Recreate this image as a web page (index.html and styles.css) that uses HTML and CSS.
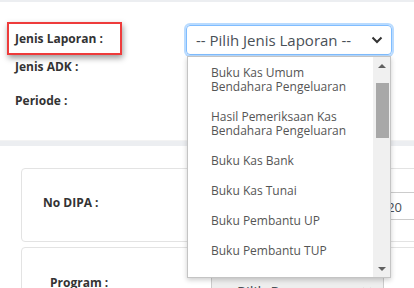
FILE: index.html
```html
<!DOCTYPE html>
<html lang="id">
<head>
  <meta charset="UTF-8">
  <title>Laporan Bendahara</title>
  <link rel="stylesheet" href="styles.css">
</head>
<body>
  <div class="topbar"></div>

  <div class="panel filter">
    <div class="row">
      <div class="label-box"><label>Jenis Laporan :</label></div>
      <div class="select focused">
        <span>-- Pilih Jenis Laporan --</span>
        <svg class="chevron" width="12" height="8" viewBox="0 0 12 8"><path d="M1.5 1.5 L6 6 L10.5 1.5" fill="none" stroke="#333" stroke-width="2"/></svg>
      </div>
    </div>
    <div class="row row-adk"><label>Jenis ADK :</label></div>
    <div class="row row-periode"><label>Periode :</label></div>

    <div class="dropdown">
      <ul class="options">
        <li>Buku Kas Umum<br>Bendahara Pengeluaran</li>
        <li>Hasil Pemeriksaan Kas<br>Bendahara Pengeluaran</li>
        <li>Buku Kas Bank</li>
        <li>Buku Kas Tunai</li>
        <li>Buku Pembantu UP</li>
        <li>Buku Pembantu TUP</li>
      </ul>
      <div class="scrollbar">
        <div class="arrow up"></div>
        <div class="thumb"></div>
        <div class="arrow down"></div>
      </div>
    </div>
  </div>

  <div class="divider"></div>

  <div class="panel content">
    <div class="card card-dipa">
      <label>No DIPA :</label>
      <div class="input">2020</div>
    </div>
    <div class="card card-program">
      <label>Program :</label>
      <div class="select disabled">
        <span>Pilih Program</span>
        <svg class="chevron" width="12" height="8" viewBox="0 0 12 8"><path d="M1.5 1.5 L6 6 L10.5 1.5" fill="none" stroke="#333" stroke-width="2"/></svg>
      </div>
    </div>
  </div>
</body>
</html>
```

FILE: styles.css
```css
body {
  margin: 0;
  height: 288px;
  overflow: hidden;
  background-color: #eceef1;
  font-family: "Open Sans", "Noto Sans", sans-serif;
  color: #333;
}
label {
  font-weight: bold;
  font-size: 12px;
  line-height: 16px;
}
.topbar {
  height: 2px;
}
.panel {
  background: white;
}
.filter {
  position: relative;
  height: 118px;
  padding: 20px 0 0 7px;
}
.row {
  display: flex;
  align-items: flex-start;
}
.row-adk {
  margin-top: 4px;
  padding-left: 8px;
}
.row-periode {
  margin-top: 18px;
  padding-left: 8px;
}
.label-box {
  box-sizing: border-box;
  width: 115px;
  height: 33px;
  border: 2px solid #ee3b3b;
  padding: 2px 0 0 6px;
  box-shadow: 1px 3px 6px rgba(0,0,0,0.4);
}
.select {
  box-sizing: border-box;
  display: flex;
  align-items: center;
  justify-content: space-between;
  height: 30px;
  border: 1px solid #ccc;
  border-radius: 4px;
  font-size: 15px;
  color: #495057;
}
.focused {
  width: 206px;
  margin: 3px 0 0 64px;
  padding: 0 8px 0 9px;
  border-color: #80bdff;
  box-shadow: 0 0 0 2px rgba(128,189,255,0.55);
}
.dropdown {
  position: absolute;
  z-index: 5;
  left: 187px;
  top: 54px;
  box-sizing: border-box;
  width: 204px;
  height: 222px;
  display: flex;
  background: white;
  border: 1px solid #c4c4c4;
  box-shadow: 0 2px 5px rgba(0,0,0,0.2);
}
.options {
  flex: 1;
  margin: 0;
  padding: 0;
  list-style: none;
  font-size: 12px;
  line-height: 14px;
  color: #555;
}
.options li {
  padding: 8px 6px 8px 23px;
}
.options li:first-child {
  padding-top: 8.5px;
}
.scrollbar {
  width: 17px;
  display: flex;
  flex-direction: column;
  background: #f0f0f0;
}
.arrow {
  height: 17px;
  display: flex;
  align-items: center;
  justify-content: center;
}
.arrow::after {
  content: "";
  border-left: 4px solid transparent;
  border-right: 4px solid transparent;
}
.up::after {
  border-bottom: 4px solid #606060;
}
.down {
  margin-top: auto;
}
.down::after {
  border-top: 4px solid #606060;
}
.thumb {
  height: 55px;
  margin: 9px 1px 0 3px;
  background: #a8a8a8;
}
.divider {
  height: 6px;
  border-top: 1px solid #f3f3f3;
  box-sizing: border-box;
}
.content {
  padding: 22px 0 20px 21px;
}
.card {
  box-sizing: border-box;
  width: 440px;
  border: 1px solid #e3e3e3;
  border-radius: 4px;
  display: flex;
}
.card-dipa {
  height: 74px;
  align-items: center;
  padding-left: 21px;
}
.card-dipa label {
  width: 157px;
  margin-top: -4px;
}
.input {
  box-sizing: border-box;
  width: 230px;
  height: 28px;
  margin-top: 2px;
  border: 1px solid #ccc;
  border-radius: 3px;
  padding: 5px 27px 0 0;
  text-align: right;
  font-size: 13px;
  color: #495057;
}
.card-program {
  height: 80px;
  margin-top: 5px;
  padding: 27px 0 0 28px;
}
.card-program label {
  width: 161px;
}
.disabled {
  width: 173px;
  margin-top: 1px;
  padding: 0 10px 0 25px;
  background: #eee;
  border-radius: 0;
}
```
